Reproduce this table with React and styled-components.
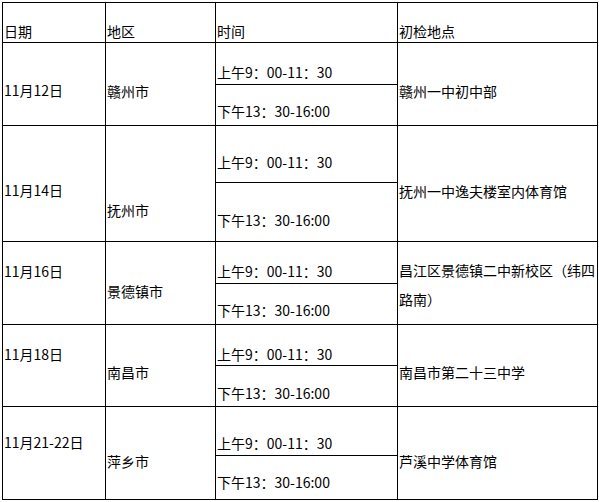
import React from 'react';
import styled, { createGlobalStyle } from 'styled-components';

const GlobalStyle = createGlobalStyle`
  body {
    margin: 0;
    background: #fff;
  }
`;

const Page = styled.div`
  padding: 2px;
`;

const Grid = styled.div`
  display: inline-grid;
  grid-template-columns: 102px 109px 181px 199px;
  grid-template-rows: 39px 41px 40px 56px 58px 41px 40px 40px 40px 48px 43px;
  gap: 1px;
  padding: 1px;
  background: #000;
`;

const Cell = styled.div`
  grid-row: ${props => (props.$span ? `span ${props.$span}` : 'auto')};
  background: #fff;
  padding: ${props => props.$pt || 0}px 0 0 1px;
  font-family: 'Noto Sans CJK SC', 'Liberation Sans', sans-serif;
  font-size: 14px;
  line-height: ${props => props.$lh || 16}px;
  color: #000;
  overflow: hidden;
  box-sizing: border-box;
`;

const AM = '上午9：00-11：30';
const PM = '下午13：30-16:00';

// pt: 日期, 地区, 上午, 下午, 地点
const rows = [
  { date: '11月12日', region: '赣州市', place: '赣州一中初中部', pt: [39, 40, 21, 18, 40] },
  { date: '11月14日', region: '抚州市', place: '抚州一中逸夫楼室内体育馆', pt: [56, 76, 28, 29, 57] },
  { date: '11月16日', region: '景德镇市', place: '昌江区景德镇二中新校区（纬四路南）', pt: [21, 41, 21, 18, 14], lh: 29 },
  { date: '11月18日', region: '南昌市', place: '南昌市第二十三中学', pt: [21, 39, 21, 19, 39] },
  { date: '11月21-22日', region: '萍乡市', place: '芦溪中学体育馆', pt: [27, 46, 28, 18, 46] },
];

export default function App() {
  return (
    <>
      <GlobalStyle />
      <Page>
        <Grid>
          {/* 表头 */}
          <Cell $pt={20}>日期</Cell>
          <Cell $pt={20}>地区</Cell>
          <Cell $pt={20}>时间</Cell>
          <Cell $pt={20}>初检地点</Cell>

          {rows.map(row => (
            <React.Fragment key={row.date}>
              <Cell $span={2} $pt={row.pt[0]}>{row.date}</Cell>
              <Cell $span={2} $pt={row.pt[1]}>{row.region}</Cell>
              <Cell $pt={row.pt[2]}>{AM}</Cell>
              <Cell $span={2} $pt={row.pt[4]} $lh={row.lh}>{row.place}</Cell>
              <Cell $pt={row.pt[3]}>{PM}</Cell>
            </React.Fragment>
          ))}
        </Grid>
      </Page>
    </>
  );
}
